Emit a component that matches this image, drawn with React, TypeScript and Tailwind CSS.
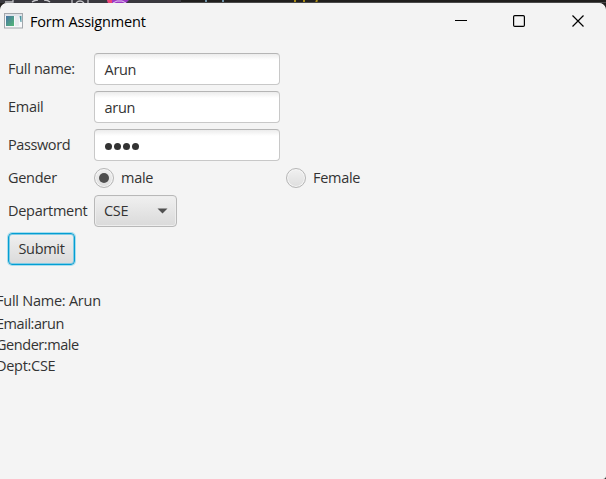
import type { ReactNode } from "react";

const fieldClass =
  "flex h-8 w-[186px] items-center rounded-[4px] border border-[#c8c8c8] border-t-[#b5b5b5] bg-white bg-linear-to-b from-[#ececec] to-white to-20% pl-[9.500px]";

function Field({ children }: { children: ReactNode }) {
  return <div className={fieldClass}>{children}</div>;
}

function Radio({ label, checked }: { label: string; checked?: boolean }) {
  return (
    <div className="flex h-[22px] items-center">
      <span className="flex size-5 items-center justify-center rounded-full border border-[#b6b6b6] bg-linear-to-b from-[#f1f1f1] to-[#dedede] shadow-[inset_0_0_0_1px_#f6f6f6]">
        {checked && <span className="size-[10px] rounded-full bg-[#505050]" />}
      </span>
      <span className="ml-[7px] leading-[22px]">{label}</span>
    </div>
  );
}

function TitleBar() {
  return (
    <header className="flex h-[37px] items-center rounded-t-[7px] bg-[#f3f3f3] text-black">
      <svg className="mb-px ml-1 shrink-0" width="19" height="16" viewBox="0 0 19 16">
        <defs>
          <linearGradient id="pane" x1="0" y1="0" x2="1" y2="1">
            <stop offset="0" stopColor="#4773a5" />
            <stop offset="1" stopColor="#54b875" />
          </linearGradient>
        </defs>
        <rect x="0.5" y="0.5" width="18" height="14.5" fill="#f7f8fa" stroke="#a3a7ac" />
        <rect x="1" y="1" width="17" height="2" fill="#dfe3e9" />
        <rect x="2" y="3" width="8" height="10" fill="url(#pane)" />
        <rect x="11" y="3" width="4" height="10" fill="#e9ebef" />
        <path d="M15.5 3h2v6h-1z" fill="#4a94a0" />
      </svg>
      <h1 className="ml-[7px] text-[14.500px] tracking-[-0.180px]">Form Assignment</h1>
      <svg className="mr-[21px] mb-px ml-auto shrink-0" width="130" height="14" viewBox="0 0 130 14" fill="none" stroke="#000" strokeWidth="1.2">
        <path d="M0 6.5h12" />
        <rect x="58.6" y="1.6" width="10.8" height="10.8" rx="1.2" />
        <path d="M117.500 1.500l11 11M128.500 1.500l-11 11" />
      </svg>
    </header>
  );
}

export default function App() {
  return (
    <div className="relative h-[479px] w-[606px] overflow-hidden bg-[#222120] font-['Open_Sans','Noto_Sans',sans-serif] text-[14.500px] leading-[21px] tracking-[-0.290px] whitespace-nowrap text-[#333]">
      <div className="flex h-[3px] bg-[#1f1e1d]">
        <svg width="606" height="3" viewBox="0 0 606 3">
          <rect width="181" height="3" fill="#39383e" />
          <path d="M5 2h8V0M32 2q3-2 6-2M44 0q4 0 6 2M72 0v3M88 0v3M76 3q4-4 8 0" stroke="#c3c3c7" strokeWidth="1.3" fill="none" />
          <path d="M107 0h22l-3 3h-18z" fill="#9c38c4" />
          <path d="M107 0h5v3h-4z" fill="#ed4574" />
          <path d="M113 3l4-2h5l4 2" stroke="#e4c9f1" fill="none" />
          <path d="M206 0v3M223 0v3" stroke="#6f91a5" strokeWidth="2" />
          <path d="M295 0v3M304 0v3M317 0l-1 3" stroke="#a78a15" strokeWidth="2" />
          <path d="M181 2.500h425" stroke="#4a4a4a" />
        </svg>
      </div>
      <div className="h-[476px] overflow-hidden rounded-t-[7px] rounded-br-[3px] bg-[#f4f4f4]">
        <TitleBar />
        <main>
          <div className="grid grid-cols-[80px_186px_auto] items-center justify-start gap-[6px] pt-[13px] pl-2">
            <span className="pb-[2px]">Full name:</span>
            <Field><span>Arun</span></Field>
            <span />
            <span className="pb-[2px]">Email</span>
            <Field><span>arun</span></Field>
            <span />
            <span className="pb-[2px] tracking-[-0.400px]">Password</span>
            <Field>
              <span className="flex gap-[2px] pt-[3px] pl-[0.500px]">
                {[0, 1, 2, 3].map((i) => (
                  <span key={i} className="size-[7px] rounded-full bg-[#333]" />
                ))}
              </span>
            </Field>
            <span />
            <span className="leading-[22px]">Gender</span>
            <Radio label="male" checked />
            <Radio label="Female" />
            <span className="pb-[2px]">Department</span>
            <div className="flex h-8 w-[83px] items-center rounded-[4px] border border-[#b8b8b8] bg-linear-to-b from-[#f0f0f0] to-[#dadada] pr-2 pl-[9px] shadow-[inset_0_0_0_1px_#ededed]">
              <span className="pb-px">CSE</span>
              <svg className="ml-auto" width="11" height="6" viewBox="0 0 11 6">
                <path d="M0.500 0.500h10l-5 5z" fill="#505050" />
              </svg>
            </div>
            <span />
            <button className="flex h-8 w-[67px] items-center justify-center rounded-[4px] border border-[#039ed3] bg-linear-to-b from-[#f0f0f0] to-[#dadada] pb-[2px] shadow-[0_0_0_1px_#a9dded,inset_0_0_0_1px_#80cbe4]">
              Submit
            </button>
          </div>
          <div className="-ml-1 pt-[25px] leading-[21.300px]">
            <p className="leading-[22.800px] tracking-[-0.240px]">Full Name: Arun</p>
            <p className="tracking-[-0.450px]">Email:arun</p>
            <p className="tracking-[-0.450px]">Gender:male</p>
            <p>Dept:CSE</p>
          </div>
        </main>
      </div>
    </div>
  );
}
